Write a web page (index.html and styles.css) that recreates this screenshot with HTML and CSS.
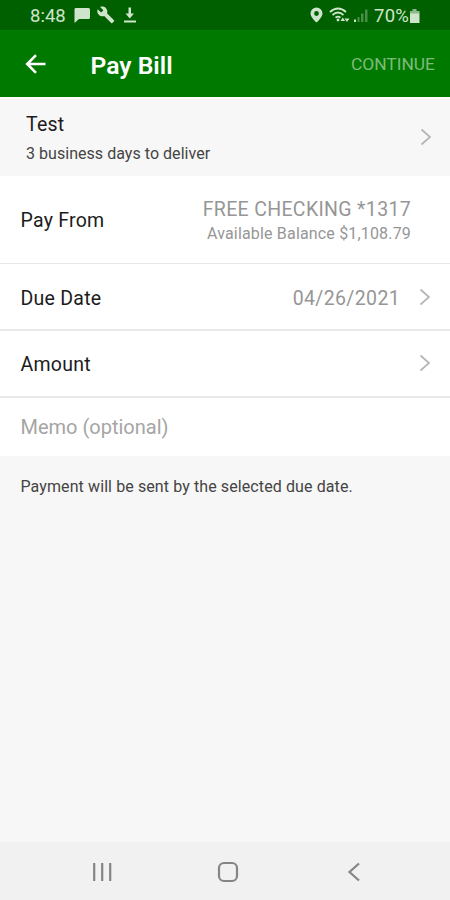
FILE: index.html
```
<!DOCTYPE html>
<html lang="en">
<head>
<meta charset="utf-8">
<title>Pay Bill</title>
<link rel="stylesheet" href="styles.css">
</head>
<body>
<div class="screen">
  <div class="status">
    <span class="time">8:48</span>
    <svg class="left-icons" width="64" height="20" viewBox="0 0 64 20" fill="currentColor">
      <path d="M1.500 2h13q1.500 0 1.500 1.500v8q0 1.500-1.500 1.500H5l-4.500 4V3.500Q0.500 2 1.500 2z"/>
      <path d="M40 14.300l-7-7c.7-1.900.3-4-1.200-5.400-1.500-1.500-3.900-1.800-5.700-1l3.300 3.300-2.300 2.300-3.400-3.300c-.8 1.800-.4 4 1.100 5.600 1.500 1.500 3.600 1.900 5.400 1.200l7 7c.3.300.8.300 1.100 0l1.700-1.700c.4-.3.400-.8 0-1z"/>
      <path d="M54.500 1.500h2.500v6h3l-4.250 5-4.250-5h3zM50 14.500h12v2H50z"/>
    </svg>
    <span class="spacer"></span>
    <svg class="right-icons" width="60" height="20" viewBox="0 0 60 20" fill="currentColor">
      <path fill-rule="evenodd" d="M6.500 1.500a6 6 0 0 0-6 6c0 4 6 9 6 9s6-5 6-9a6 6 0 0 0-6-6zm0 3.600a2.400 2.400 0 1 1 0 4.800 2.400 2.400 0 0 1 0-4.800z"/>
      <g fill="none" stroke="currentColor" stroke-width="1.700">
        <path d="M20 6q8-7 16 0M22.500 9q5.500-5 11 0M25.500 11.700q2.500-2.200 5 0"/>
      </g>
      <circle cx="28" cy="14" r="1.400"/>
      <path d="M30.500 15l2.300-3.500 2.300 3.500zM34.500 12.500H39.500l-2.500 3.500z"/>
      <path d="M44 13.500h2V16h-2z"/>
      <path class="faint" d="M47.500 11h2v5h-2zM51 7.500h2.500V16H51zM55 3.500h2.500V16H55z"/>
    </svg>
    <span class="percent">70%</span>
    <svg class="battery" width="12" height="16" viewBox="0 0 12 16"><path d="M3.500 1h4v2H10.500v3H1V3h2.500z" fill="#8fb98c"/><path d="M1 5.500h9.500V15H1z" fill="currentColor"/></svg>
  </div>
  <header class="bar">
    <svg class="back" width="22" height="22" viewBox="0 0 22 22"><path d="M20.500 11H2.500M11 2.200L2.200 11 11 19.800"/></svg>
    <h1>Pay Bill</h1>
    <span class="continue">CONTINUE</span>
  </header>
  <section class="payee">
    <div class="who">
      <div class="label">Test</div>
      <div class="sub">3 business days to deliver</div>
    </div>
    <svg class="chev" width="12" height="18" viewBox="0 0 12 18"><path d="M1.500 1.500L10 9l-8.500 7.500"/></svg>
  </section>
  <section class="row from">
    <span class="label">Pay From</span>
    <div class="account">
      <div class="name">FREE CHECKING *1317</div>
      <div class="balance">Available Balance $1,108.79</div>
    </div>
  </section>
  <section class="row due">
    <span class="label">Due Date</span>
    <span class="date">04/26/2021</span>
    <svg class="chev" width="12" height="18" viewBox="0 0 12 18"><path d="M1.500 1.500L10 9l-8.500 7.500"/></svg>
  </section>
  <section class="row amount">
    <span class="label">Amount</span>
    <svg class="chev" width="12" height="18" viewBox="0 0 12 18"><path d="M1.500 1.500L10 9l-8.500 7.500"/></svg>
  </section>
  <section class="row memo"><span class="placeholder">Memo (optional)</span></section>
  <p class="note">Payment will be sent by the selected due date.</p>
  <nav class="nav">
    <svg width="20" height="20" viewBox="0 0 20 20"><path d="M2.200 1v18M10.200 1v18M18.200 1v18"/></svg>
    <svg width="22" height="22" viewBox="0 0 22 22"><rect x="2" y="2" width="18" height="18" rx="5"/></svg>
    <svg width="14" height="20" viewBox="0 0 14 20"><path d="M12 1.500L2.500 10l9.500 8.500"/></svg>
  </nav>
</div>
</body>
</html>
```
FILE: styles.css
```
* { box-sizing: border-box; }
body { margin: 0; font-family: Roboto, "Liberation Sans", sans-serif; background: #f7f7f7; }
svg { display: block; flex: none; }
.screen { width: 450px; height: 900px; display: flex; flex-direction: column; overflow: hidden; white-space: nowrap; background: #f7f7f7; }
.status { height: 30px; flex: none; display: flex; align-items: center; padding: 1px 28px 0 30px; background: #006000; color: #cfe5cb; font-size: 18.500px; }
.left-icons { margin: 1px 0 0 8px; }
.spacer { flex: 1; }
.right-icons { margin-right: 4px; }
.percent { letter-spacing: .2px; }
.battery { margin-right: 1px; }
.faint { opacity: .35; }
.bar { height: 67px; flex: none; display: flex; align-items: center; padding: 1px 15px 0 25px; background: #007900; color: #fff; }
.back { fill: none; stroke: #fff; stroke-width: 2.600; }
h1 { margin: 3px 0 0 43.500px; font-size: 24.700px; font-weight: 600; line-height: 28px; flex: 1; }
.continue { font-size: 17.400px; color: #7fbb7b; }
.payee { height: 79px; flex: none; display: flex; justify-content: space-between; align-items: center; padding: 0 18px 0 26px; border-top: 2px solid #fff; background: #f7f7f7; }
.who { margin-top: 2px; }
.payee .chev { margin-bottom: 2px; }
.label { font-size: 19.500px; line-height: 24px; letter-spacing: .25px; color: #1c1c1c; }
.sub { margin-top: 7px; font-size: 16px; line-height: 20px; letter-spacing: .04px; color: #444; }
.chev { fill: none; stroke: #b5b5b5; stroke-width: 1.700; }
.row { flex: none; display: flex; align-items: center; justify-content: space-between; padding: 0 19px 0 20.500px; background: #fff; border-bottom: 2px solid #e8e8e8; }
.from { height: 88px; border-bottom-width: 1px; padding-top: 3px; padding-right: 39px; }
.account { margin-top: 1px; text-align: right; color: #969696; }
.name { font-size: 19.500px; line-height: 24px; letter-spacing: .33px; }
.balance { font-size: 16px; line-height: 24px; letter-spacing: .17px; }
.due { height: 67px; }
.due .label { margin-top: 4px; }
.due .date { margin-top: 3px; }
.date { flex: 1; text-align: right; margin-right: 19px; font-size: 19.500px; letter-spacing: .35px; color: #969696; }
.amount { height: 67px; }
.amount .label { margin-top: 2px; }
.amount .chev { margin-bottom: 1px; }
.memo { height: 58px; border: 0; }
.placeholder { font-size: 20px; color: #a5a5a5; }
.note { flex: 1; margin: 0; padding: 20px 20.500px; font-size: 16px; line-height: 22px; letter-spacing: .1px; color: #444; }
.nav { height: 58px; flex: none; display: flex; align-items: center; justify-content: space-between; padding: 2px 89px 0 92px; background: #f1f1f1; }
.nav svg { fill: none; stroke: #858585; stroke-width: 2.200; }
.nav svg:nth-child(2) { margin: 0 4px 0 0; }
```
